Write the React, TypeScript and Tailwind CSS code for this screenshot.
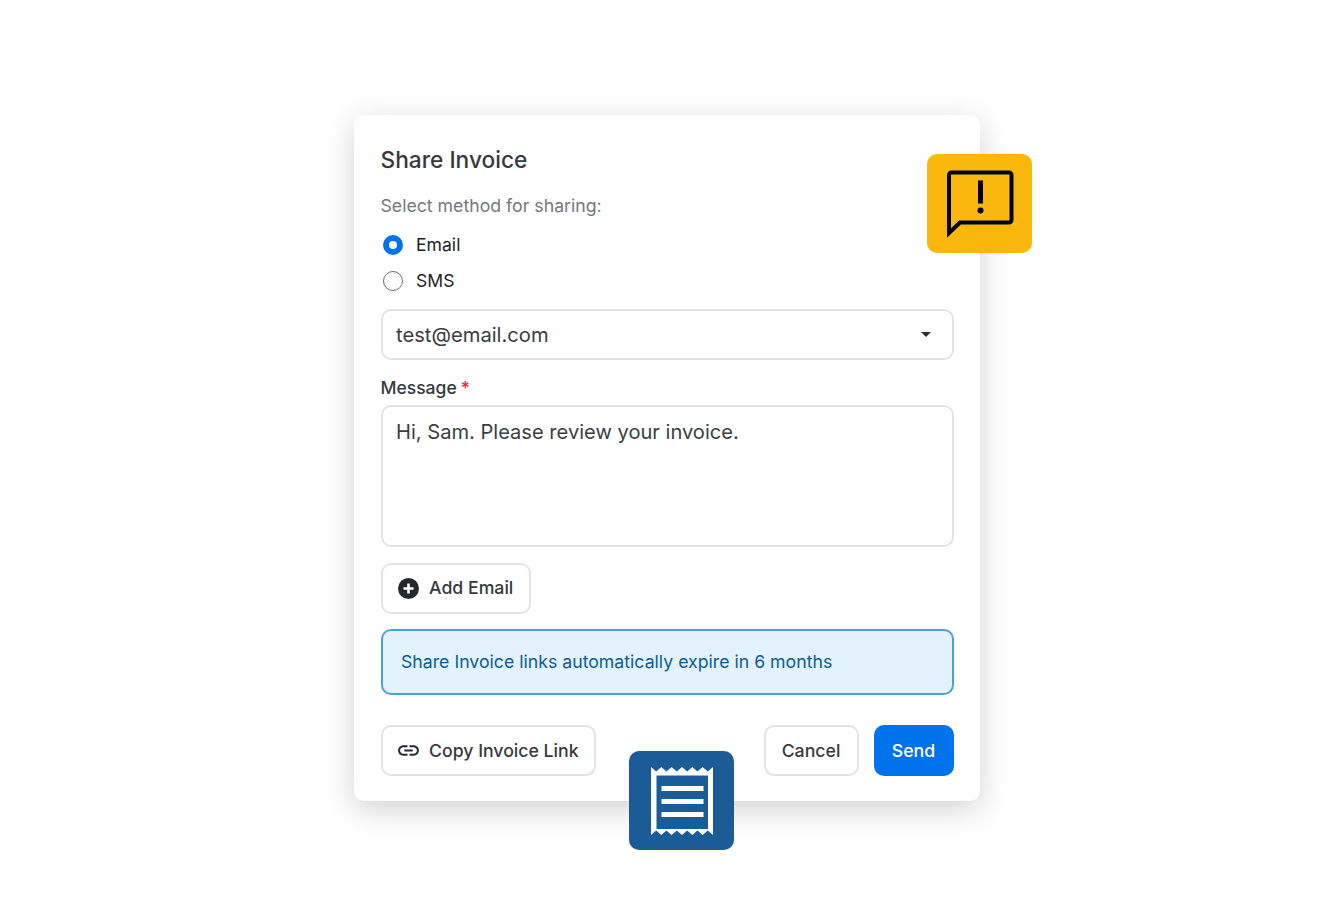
function AlertBadge() {
  return (
    <div className="absolute left-[573px] top-[39px] flex h-[99px] w-[105px] items-center justify-center rounded-[10px] bg-[#fab80f]">
      <svg width="70" height="70" viewBox="0 0 70 70" fill="none">
        <path
          d="M4 64V6a2.500 2.500 0 0 1 2.500-2.500h57.500A2.500 2.500 0 0 1 66.500 6v45a2.500 2.500 0 0 1-2.500 2.500H15Z"
          stroke="#000"
          strokeWidth="4"
        />
        <rect x="33" y="11.500" width="5" height="23" fill="#000" />
        <circle cx="35.500" cy="41.500" r="3" fill="#000" />
      </svg>
    </div>
  )
}

function ReceiptBadge() {
  return (
    <div className="absolute left-[275px] top-[636px] flex h-[99px] w-[105px] items-center justify-center rounded-[10px] bg-[#1b5c97]">
      <svg width="62" height="68" viewBox="0 0 62 68" fill="none">
        <path
          d="M0 0l5.200 4.500L10.300 0l5.200 4.500L20.600 0l5.200 4.500L31 0l5.200 4.500L41.300 0l5.200 4.500L51.600 0l5.200 4.500L62 0v68l-5.200-4.500L51.600 68l-5.100-4.500L41.300 68l-5.100-4.500L31 68l-5.200-4.500L20.600 68l-5.100-4.500L10.300 68l-5.100-4.500L0 68Z"
          fill="#fff"
        />
        <rect x="5.500" y="8.500" width="51.500" height="53.500" fill="#1b5c97" />
        <rect x="10.500" y="19" width="42" height="5" fill="#fff" />
        <rect x="10.500" y="32" width="42" height="5" fill="#fff" />
        <rect x="10.500" y="45" width="42" height="5" fill="#fff" />
      </svg>
    </div>
  )
}

function Radio({ label, checked }: { label: string; checked?: boolean }) {
  return (
    <div className="flex h-[36px] items-center gap-[13px] pl-[2.500px]">
      {checked ? (
        <span className="flex h-[20px] w-[20px] items-center justify-center rounded-full bg-[#0073ec]">
          <span className="h-[8px] w-[8px] rounded-full bg-white" />
        </span>
      ) : (
        <span className="h-[20px] w-[20px] rounded-full border-[1.500px] border-[#6f6f6f]" />
      )}
      <span className="pt-[1px] text-[17.600px] text-[#1f2226]">{label}</span>
    </div>
  )
}

export default function App() {
  return (
    <div className="flex h-[917px] justify-center bg-white pt-[115px] font-['Inter',sans-serif]">
      <div className="relative h-[686px] w-[626px] rounded-[10px] bg-white px-[26.500px] pt-[30px] shadow-[0_8px_30px_rgba(0,0,0,0.18)]">
        <h1 className="text-[22.700px] leading-[30px] font-[450] text-[#36393d]">Share Invoice</h1>
        <p className="mt-[18.500px] text-[17.700px] leading-[24px] text-[#74787c]">Select method for sharing:</p>
        <div className="mt-[9.500px]">
          <Radio label="Email" checked />
          <Radio label="SMS" />
        </div>
        <div className="mt-[10px] flex h-[51px] items-center justify-between rounded-[10px] border-2 border-[#e2e3e4] pr-[21px] pl-[13.500px]">
          <span className="pt-[1px] text-[20.200px] text-[#3a3e42]">test@email.com</span>
          <span className="h-0 w-0 border-x-[5.500px] border-t-[5.500px] border-x-transparent border-t-[#2a2d30]" />
        </div>
        <div className="mt-[16px] flex h-[24px] items-center gap-[4px] text-[17.500px] font-[450] text-[#36393d]">
          Message
          <span className="text-[#f5222d]">*</span>
        </div>
        <div className="mt-[5px] h-[142px] rounded-[10px] border-2 border-[#e2e3e4] pt-[12px] pl-[13.500px] text-[20.100px] leading-[26px] text-[#3a3e42]">
          Hi, Sam. Please review your invoice.
        </div>
        <button className="mt-[15.500px] flex h-[51px] w-[150.500px] items-center gap-[10px] rounded-[10px] border-2 border-[#e2e3e4] pt-[1px] pl-[15.500px] text-[17.700px] font-[450] text-[#36393d]">
          <svg width="21" height="21" viewBox="0 0 21 21">
            <circle cx="10.500" cy="10.500" r="10.500" fill="#26292c" />
            <path d="M10.500 5.500v10M5.500 10.500h10" stroke="#fff" strokeWidth="2.600" />
          </svg>
          Add Email
        </button>
        <div className="mt-[15px] flex h-[66px] items-center rounded-[10px] border-2 border-[#48a1da] bg-[#e3f2fd] pt-[1px] pl-[18.500px] text-[17.700px] text-[#0b5c96]">
          Share Invoice links automatically expire in 6 months
        </div>
        <div className="mt-[30.500px] flex gap-[15px]">
          <button className="mr-auto flex h-[51px] w-[215.500px] items-center gap-[8.500px] rounded-[10px] border-2 border-[#e2e3e4] pl-[13px] text-[17.700px] font-[450] text-[#36393d]">
            <svg width="25" height="25" viewBox="0 0 24 24" fill="#26292c">
              <path d="M3.900 12c0-1.710 1.390-3.100 3.100-3.100h4V7H7c-2.760 0-5 2.240-5 5s2.240 5 5 5h4v-1.900H7c-1.710 0-3.100-1.390-3.100-3.100zM8 13h8v-2H8v2zm9-6h-4v1.900h4c1.710 0 3.100 1.390 3.100 3.100s-1.390 3.100-3.100 3.100h-4V17h4c2.760 0 5-2.240 5-5s-2.240-5-5-5z" />
            </svg>
            <span className="pt-[1px]">Copy Invoice Link</span>
          </button>
          <button className="h-[51px] w-[95px] rounded-[10px] border-2 border-[#e2e3e4] pt-[1px] text-[17.700px] font-[450] text-[#36393d]">
            Cancel
          </button>
          <button className="h-[51px] w-[80px] rounded-[10px] bg-[#0073ec] pt-[1px] text-[17.700px] font-[450] text-white">
            Send
          </button>
        </div>
        <AlertBadge />
        <ReceiptBadge />
      </div>
    </div>
  )
}
